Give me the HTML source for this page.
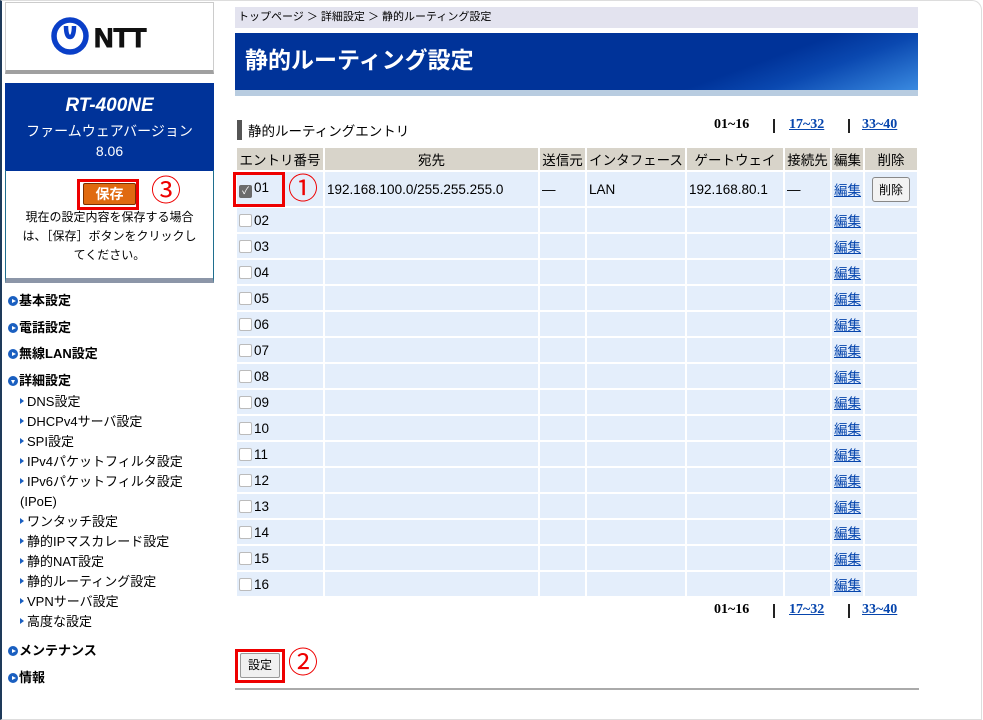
<!DOCTYPE html>
<html><head><meta charset="utf-8"><style>
*{margin:0;padding:0;box-sizing:border-box}
body{width:983px;height:698px;background:#fff;font-family:"Liberation Sans","Noto Sans CJK JP",sans-serif;font-size:13px;color:#000;position:relative;overflow:hidden}
.a{position:absolute}
.frame{left:0;top:0;width:982px;height:720px;border:1px solid #ddd;border-radius:0 10px 0 0;border-left:2px solid #1e3a5a}
.logo{left:5px;top:2px;width:209px;height:72px;background:#fff;border:1px solid #ccc;border-bottom:4px solid #a0a0a0;display:flex;align-items:center;justify-content:center}
.blue{left:5px;top:83px;width:209px;height:88px;background:#003399;color:#fff;text-align:center}
.wbox{left:5px;top:170px;width:209px;height:113px;border:1px solid #1f6f8f;border-top:none;border-bottom:5px solid #8c96a8;text-align:center;font-size:12px;line-height:19px}
.nav{left:8px;font-weight:bold;font-size:13px}
.nav i{display:inline-block;width:10px;height:10px;border-radius:50%;background:#1a5fc0;vertical-align:-1px;margin-right:1px;position:relative}
.nav i:after{content:"";position:absolute;left:4px;top:2.5px;border-left:4px solid #fff;border-top:2.5px solid transparent;border-bottom:2.5px solid transparent}
.nav i.d:after{left:2.5px;top:4px;border-top:4px solid #fff;border-left:2.5px solid transparent;border-right:2.5px solid transparent;border-bottom:none}
.sub{left:20px;font-size:13px;line-height:16px}
.sub b{display:inline-block;border-left:4px solid #1a5fc0;border-top:3px solid transparent;border-bottom:3px solid transparent;vertical-align:2px;margin-right:3px}
table{border-collapse:separate;border-spacing:2px}
td,th{padding:0 2px;font-weight:normal;white-space:nowrap;font-size:13.5px}
th{background:#d8d4ca;height:22px;text-align:center}
td{background:#e4eefb;height:24px}
.cb{display:inline-block;width:13px;height:13px;border:1px solid #bbb;border-radius:2px;background:#fff;vertical-align:-2px;margin-right:2px}
.cb.on{background:#6b6b6b;border-color:#6b6b6b;color:#fff;font-size:10px;line-height:11px;text-align:center}
a{color:#0645ad;text-decoration:underline}
.pg{font-weight:bold;font-family:"Liberation Serif",serif;font-size:14px}
.bar{width:2px;height:14px;background:#222}
.red{border:3px solid #e00;}
.circ{color:#e00;font-size:30px;line-height:30px}
</style></head><body>
<div class="a frame"></div>
<div class="a logo"><svg width="120" height="44" viewBox="0 0 120 44"><circle cx="20" cy="21" r="16" fill="none" stroke="#0a3fc8" stroke-width="5.5"/><path d="M16 11 Q16 22 20 22 Q24 22 24 11" fill="none" stroke="#0a3fc8" stroke-width="4.5"/><text x="44" y="32" font-family="Liberation Sans" font-weight="bold" font-size="27" fill="#111" stroke="#111" stroke-width="1">NTT</text></svg></div>
<div class="a blue"><div style="font-size:19px;font-weight:bold;font-style:italic;margin-top:12px">RT-400NE</div><div style="font-size:14px;margin-top:4px">ファームウェアバージョン</div><div style="font-size:14px;margin-top:2px">8.06</div></div>
<div class="a wbox"><div style="margin-top:8px;height:30px"></div>現在の設定内容を保存する場合<br>は、［保存］ボタンをクリックし<br>てください。</div>
<div class="a red" style="left:77px;top:179px;width:62px;height:31px"></div>
<div class="a" style="left:83px;top:183px;width:53px;height:22px;background:#e06a10;border:1px solid #7a3000;border-radius:2px;color:#fff;font-weight:bold;text-align:center;line-height:20px;font-size:14px">保存</div>
<div class="a circ" style="left:151px;top:177px">③</div>
<div class="a nav" style="top:290px"><i></i>基本設定</div>
<div class="a nav" style="top:317px"><i></i>電話設定</div>
<div class="a nav" style="top:343px"><i></i>無線LAN設定</div>
<div class="a nav" style="top:370px"><i class="d"></i>詳細設定</div>
<div class="a sub" style="top:394px"><b></b>DNS設定</div>
<div class="a sub" style="top:414px"><b></b>DHCPv4サーバ設定</div>
<div class="a sub" style="top:434px"><b></b>SPI設定</div>
<div class="a sub" style="top:454px"><b></b>IPv4パケットフィルタ設定</div>
<div class="a sub" style="top:474px"><b></b>IPv6パケットフィルタ設定</div>
<div class="a" style="left:20px;top:494px;line-height:16px">(IPoE)</div>
<div class="a sub" style="top:514px"><b></b>ワンタッチ設定</div>
<div class="a sub" style="top:534px"><b></b>静的IPマスカレード設定</div>
<div class="a sub" style="top:554px"><b></b>静的NAT設定</div>
<div class="a sub" style="top:574px"><b></b>静的ルーティング設定</div>
<div class="a sub" style="top:594px"><b></b>VPNサーバ設定</div>
<div class="a sub" style="top:614px"><b></b>高度な設定</div>
<div class="a nav" style="top:640px"><i></i>メンテナンス</div>
<div class="a nav" style="top:667px"><i></i>情報</div>

<div class="a" style="left:235px;top:7px;width:683px;height:21px;background:#e3e3ef;font-size:11px;line-height:21px;padding-left:3px">トップページ ＞ 詳細設定 ＞ 静的ルーティング設定</div>
<div class="a" style="left:235px;top:33px;width:683px;height:57px;background:linear-gradient(160deg,#003399 0%,#003399 72%,#0a48b0 82%,#3a8ae0 100%);color:#fff;font-size:23px;font-weight:bold;line-height:54px;padding-left:10px">静的ルーティング設定</div>
<div class="a" style="left:235px;top:90px;width:683px;height:6px;background:#b8cce0"></div>
<div class="a" style="left:237px;top:120px;width:5px;height:20px;background:#555"></div>
<div class="a" style="left:248px;top:120px;font-size:13.5px">静的ルーティングエントリ</div>
<div class="a pg" style="left:714px;top:117px">01~16</div><div class="a bar" style="left:773px;top:119px"></div><div class="a pg" style="left:789px;top:117px"><a>17~32</a></div><div class="a bar" style="left:848px;top:119px"></div><div class="a pg" style="left:862px;top:117px"><a>33~40</a></div>
<table class="a" style="left:235px;top:146px;width:684px">
<tr><th style="width:86px">エントリ番号</th><th style="width:213px">宛先</th><th style="width:45px">送信元</th><th style="width:98px">インタフェース</th><th style="width:96px">ゲートウェイ</th><th style="width:45px">接続先</th><th style="width:31px">編集</th><th>削除</th></tr>
<tr><td style="height:34px"><span class="cb on">✓</span>01</td><td>192.168.100.0/255.255.255.0</td><td>—</td><td>LAN</td><td>192.168.80.1</td><td>—</td><td><a>編集</a></td><td style="text-align:center"><span style="display:inline-block;border:1px solid #888;border-radius:3px;background:#f2f2f2;padding:3px 6px;font-size:12px">削除</span></td></tr>
<tr><td><span class="cb"></span>02</td><td></td><td></td><td></td><td></td><td></td><td><a>編集</a></td><td></td></tr>
<tr><td><span class="cb"></span>03</td><td></td><td></td><td></td><td></td><td></td><td><a>編集</a></td><td></td></tr>
<tr><td><span class="cb"></span>04</td><td></td><td></td><td></td><td></td><td></td><td><a>編集</a></td><td></td></tr>
<tr><td><span class="cb"></span>05</td><td></td><td></td><td></td><td></td><td></td><td><a>編集</a></td><td></td></tr>
<tr><td><span class="cb"></span>06</td><td></td><td></td><td></td><td></td><td></td><td><a>編集</a></td><td></td></tr>
<tr><td><span class="cb"></span>07</td><td></td><td></td><td></td><td></td><td></td><td><a>編集</a></td><td></td></tr>
<tr><td><span class="cb"></span>08</td><td></td><td></td><td></td><td></td><td></td><td><a>編集</a></td><td></td></tr>
<tr><td><span class="cb"></span>09</td><td></td><td></td><td></td><td></td><td></td><td><a>編集</a></td><td></td></tr>
<tr><td><span class="cb"></span>10</td><td></td><td></td><td></td><td></td><td></td><td><a>編集</a></td><td></td></tr>
<tr><td><span class="cb"></span>11</td><td></td><td></td><td></td><td></td><td></td><td><a>編集</a></td><td></td></tr>
<tr><td><span class="cb"></span>12</td><td></td><td></td><td></td><td></td><td></td><td><a>編集</a></td><td></td></tr>
<tr><td><span class="cb"></span>13</td><td></td><td></td><td></td><td></td><td></td><td><a>編集</a></td><td></td></tr>
<tr><td><span class="cb"></span>14</td><td></td><td></td><td></td><td></td><td></td><td><a>編集</a></td><td></td></tr>
<tr><td><span class="cb"></span>15</td><td></td><td></td><td></td><td></td><td></td><td><a>編集</a></td><td></td></tr>
<tr><td><span class="cb"></span>16</td><td></td><td></td><td></td><td></td><td></td><td><a>編集</a></td><td></td></tr>
</table>
<div class="a red" style="left:233px;top:172px;width:52px;height:35px"></div>
<div class="a circ" style="left:288px;top:175px">①</div>
<div class="a pg" style="left:714px;top:602px">01~16</div><div class="a bar" style="left:773px;top:604px"></div><div class="a pg" style="left:789px;top:602px"><a>17~32</a></div><div class="a bar" style="left:848px;top:604px"></div><div class="a pg" style="left:862px;top:602px"><a>33~40</a></div>
<div class="a red" style="left:235px;top:649px;width:50px;height:34px"></div>
<div class="a" style="left:240px;top:653px;width:40px;height:25px;border:1px solid #999;border-radius:2px;background:#f0f0f0;font-size:12px;text-align:center;line-height:23px">設定</div>
<div class="a circ" style="left:288px;top:649px">②</div>
<div class="a" style="left:235px;top:688px;width:684px;height:2px;background:#aaa"></div>
</body></html>
